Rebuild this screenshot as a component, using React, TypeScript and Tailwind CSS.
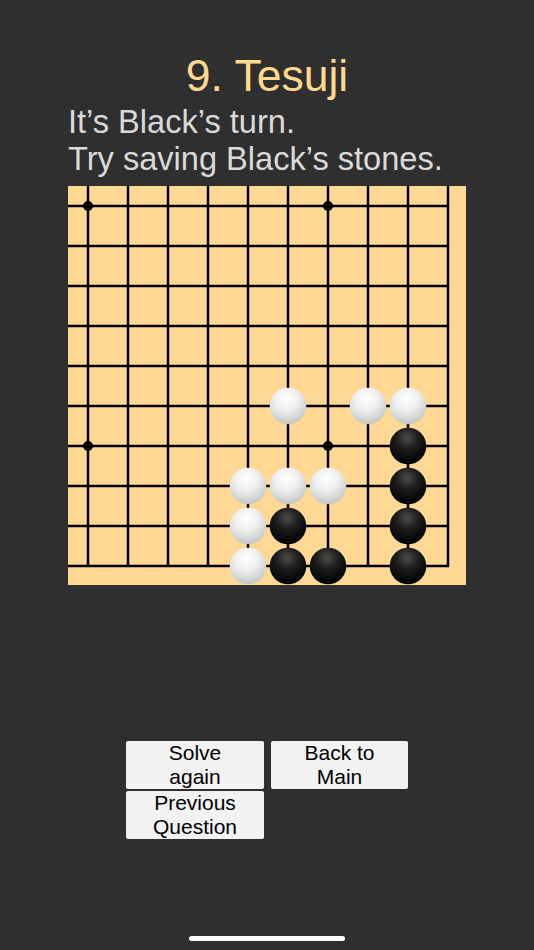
import React from "react";

const WHITE: [number, number][] = [
  [5, 5], [7, 5], [8, 5], [4, 7], [5, 7], [6, 7], [4, 8], [4, 9],
];
const BLACK: [number, number][] = [
  [8, 6], [8, 7], [8, 8], [8, 9], [5, 8], [5, 9], [6, 9],
];
const STARS: [number, number][] = [
  [0, 0], [6, 0], [0, 6], [6, 6],
];

const p = (i: number) => 20 + 40 * i;

function Board() {
  const idx = Array.from({ length: 10 }, (_, i) => i);
  return (
    <svg width="398" height="399" viewBox="0 0 398 399" className="block">
      <defs>
        <radialGradient id="wg" cx="45%" cy="30%" r="70%">
          <stop offset="0%" stopColor="#ffffff" />
          <stop offset="45%" stopColor="#f0f0f0" />
          <stop offset="100%" stopColor="#c6c6c6" />
        </radialGradient>
        <radialGradient id="bg" cx="48%" cy="28%" r="70%">
          <stop offset="0%" stopColor="#4a4a4a" />
          <stop offset="45%" stopColor="#1c1c1c" />
          <stop offset="100%" stopColor="#000000" />
        </radialGradient>
      </defs>
      {idx.map((i) => (
        <line key={"v" + i} x1={p(i)} y1={0} x2={p(i)} y2={381} stroke="#000" strokeWidth={2.5} />
      ))}
      {idx.map((i) => (
        <line key={"h" + i} x1={0} y1={p(i)} x2={381} y2={p(i)} stroke="#000" strokeWidth={2.5} />
      ))}
      {STARS.map(([c, r], k) => (
        <circle key={"s" + k} cx={p(c)} cy={p(r)} r={5} fill="#000" />
      ))}
      {WHITE.map(([c, r], k) => (
        <circle key={"w" + k} cx={p(c)} cy={p(r)} r={18.3} fill="url(#wg)" />
      ))}
      {BLACK.map(([c, r], k) => (
        <circle key={"b" + k} cx={p(c)} cy={p(r)} r={18.3} fill="url(#bg)" />
      ))}
    </svg>
  );
}

export default function App() {
  return (
    <div
      className="w-[534px] h-[950px] bg-[#2f2f2f] flex flex-col items-center overflow-hidden"
      style={{ fontFamily: '"Liberation Sans", Arial, sans-serif' }}
    >
      <div className="pt-[50px] text-[44.5px] leading-[52px] text-[#ffd98e]">9. Tesuji</div>
      <div className="self-stretch px-[68px] mt-[1px] text-[32.6px] leading-[37px] text-[#dadada]">
        It’s Black’s turn.
        <br />
        Try saving Black’s stones.
      </div>
      <div className="mt-[9px] w-[398px] h-[399px] bg-[#ffd994]">
        <Board />
      </div>
      <div className="mt-[156px] grid grid-cols-[138px_137px] gap-x-[7px] gap-y-[2px]">
        <button className="h-[48px] bg-[#f2f2f2] rounded-[2px] text-black text-[21px] leading-[24px] text-center">
          Solve
          <br />
          again
        </button>
        <button className="h-[48px] bg-[#f2f2f2] rounded-[2px] text-black text-[21px] leading-[24px] text-center">
          Back to
          <br />
          Main
        </button>
        <button className="h-[48px] bg-[#f2f2f2] rounded-[2px] text-black text-[21px] leading-[24px] text-center">
          Previous
          <br />
          Question
        </button>
      </div>
      <div className="mt-[97px] w-[156px] h-[5px] rounded-full bg-white" />
    </div>
  );
}
